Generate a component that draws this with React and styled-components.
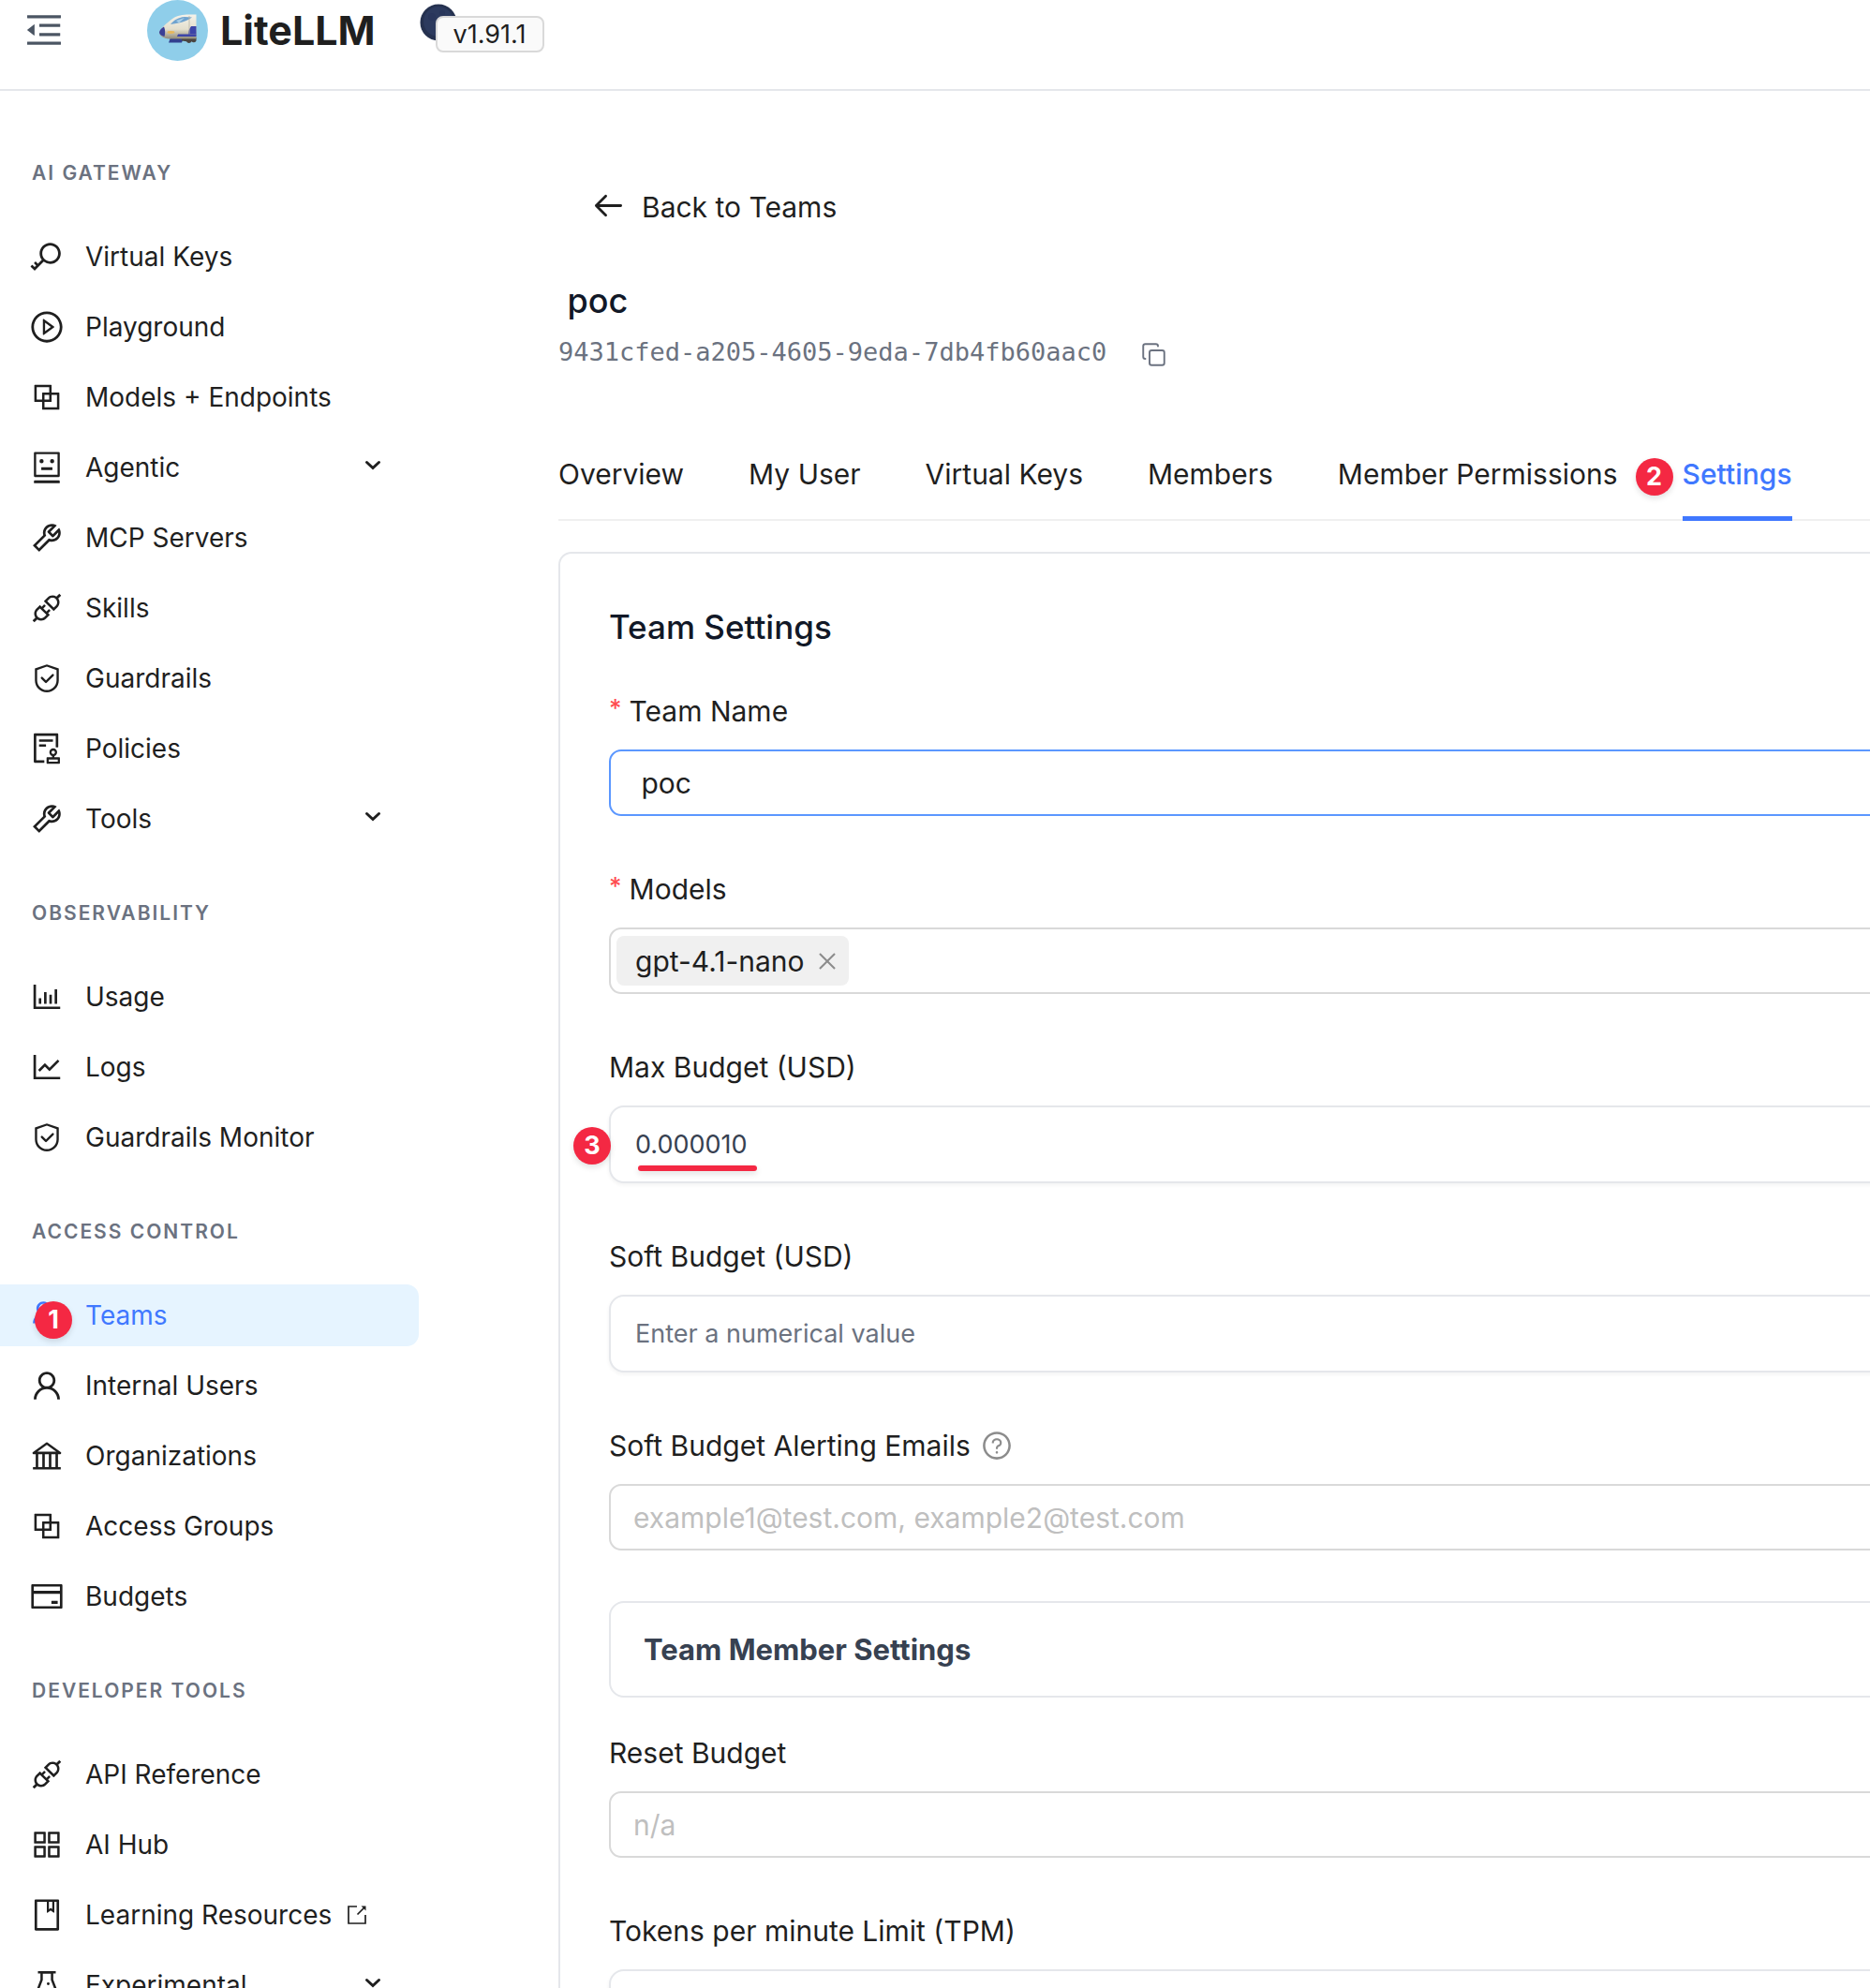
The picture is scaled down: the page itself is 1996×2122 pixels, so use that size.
import React, { useState } from "react";
import styled, { createGlobalStyle, css } from "styled-components";
import {
  AiOutlineApi,
  AiOutlineAppstore,
  AiOutlineAudit,
  AiOutlineBank,
  AiOutlineBarChart,
  AiOutlineBlock,
  AiOutlineBook,
  AiOutlineClose,
  AiOutlineCreditCard,
  AiOutlineExperiment,
  AiOutlineKey,
  AiOutlineLineChart,
  AiOutlineMenuFold,
  AiOutlinePlayCircle,
  AiOutlineQuestionCircle,
  AiOutlineRobot,
  AiOutlineSafety,
  AiOutlineTeam,
  AiOutlineTool,
  AiOutlineUser,
} from "react-icons/ai";

const sans = `Inter, "Liberation Sans", sans-serif`;

const GlobalStyle = createGlobalStyle`
  *, *::before, *::after { box-sizing: border-box; }
  body {
    margin: 0;
    background: #fff;
    color: #1f1f1f;
    font-family: ${sans};
    -webkit-font-smoothing: antialiased;
  }
  button, input, select { font: inherit; color: inherit; margin: 0; }
  h1, h2, p, ul { margin: 0; padding: 0; }
  ul { list-style: none; }
`;

const Shell = styled.div`
  display: flex;
  flex-direction: column;
  height: 100vh;
  overflow: hidden;
`;

/* ---------- top bar ---------- */

const TopBar = styled.header`
  display: flex;
  align-items: center;
  flex: none;
  padding: 0 24px 31px;
  border-bottom: 2px solid #e5e7eb;
`;

const plainButton = css`
  border: 0;
  padding: 0;
  background: none;
  cursor: pointer;
`;

const CollapseButton = styled.button`
  ${plainButton}
  display: flex;
  color: #4b5563;
`;

const Brand = styled.a`
  display: flex;
  align-items: center;
  gap: 13px;
  height: 64px;
  margin-left: 87px;
  color: #1f1f1f;
  font-size: 43px;
  font-weight: 700;
  text-decoration: none;
`;

const Version = styled.div`
  position: relative;
  margin-left: 64px;
`;

const Moon = styled.svg`
  position: absolute;
  left: -17px;
  top: -4px;
`;

const VersionTag = styled.a`
  position: relative;
  display: block;
  margin-top: 9px;
  padding: 0 17px;
  border: 2px solid #d9d9d9;
  border-radius: 8px;
  background: #fafafa;
  color: #1f1f1f;
  font-size: 27px;
  line-height: 35px;
  text-decoration: none;
`;

/* ---------- sidebar ---------- */

const Body = styled.div`
  display: flex;
  flex: 1;
  min-height: 0;
`;

const Sidebar = styled.nav`
  flex: none;
  width: 447px;
  overflow: hidden;
`;

const GroupTitle = styled.h2`
  padding: 54px 34px 43px;
  color: #6b7280;
  font-size: 21px;
  font-weight: 600;
  line-height: 27px;
  letter-spacing: 2px;
  text-transform: uppercase;
`;

const FirstTitle = styled(GroupTitle)`
  padding-top: 74px;
`;

const ItemList = styled.ul`
  display: flex;
  flex-direction: column;
  gap: 9px;
`;

const itemStyle = css`
  position: relative;
  display: flex;
  align-items: center;
  width: 100%;
  height: 66px;
  padding: 0 40px 0 31px;
  border: 0;
  border-radius: 0 13px 13px 0;
  background: ${(p) => (p.$active ? "#e6f4ff" : "none")};
  color: ${(p) => (p.$active ? "#4078ff" : "#1f1f1f")};
  font-size: 28px;
  text-align: left;
  text-decoration: none;
  white-space: nowrap;
  cursor: pointer;
`;

const ItemLink = styled.a`${itemStyle}`;
const ItemToggle = styled.button`${itemStyle}`;

const ItemIcon = styled.span`
  display: flex;
  flex: none;
  justify-content: center;
  width: 38px;
  margin-right: 22px;
`;

const ItemText = styled.span`
  flex: 1;
  display: flex;
  align-items: center;
  gap: 17px;
`;

const Marker = styled.span`
  position: absolute;
  left: ${(p) => p.$left}px;
  top: ${(p) => p.$top}px;
  width: 40px;
  height: 40px;
  border-radius: 50%;
  background: #f42843;
  box-shadow: 0 3px 6px rgba(0, 0, 0, 0.12);
  color: #fff;
  font-size: 27px;
  font-weight: 700;
  line-height: 40px;
  text-align: center;
`;

/* ---------- team page ---------- */

const Main = styled.main`
  flex: 1;
  min-width: 0;
  padding: 99px 0 0 149px;
  overflow: hidden;
`;

const BackButton = styled.button`
  ${plainButton}
  display: flex;
  align-items: center;
  gap: 18px;
  margin-left: 36px;
  font-size: 30px;
  line-height: 50px;

  svg { margin-bottom: 4px; }
`;

const TeamTitle = styled.h1`
  margin-top: 48px;
  color: #111827;
  font-size: 36px;
  font-weight: 500;
  line-height: 54px;
  white-space: pre;
`;

const IdRow = styled.div`
  display: flex;
  align-items: center;
  gap: 37px;
  height: 54px;
  color: #6b7280;
`;

const TeamId = styled.p`
  font-family: "DejaVu Sans Mono", monospace;
  font-size: 27px;
`;

const CopyButton = styled.button`
  ${plainButton}
  display: flex;
  padding-top: 6px;
`;

const TabBar = styled.div`
  display: flex;
  gap: 69px;
  margin-top: 56px;
  border-bottom: 2px solid #f0f0f0;
`;

const Tab = styled.button`
  ${plainButton}
  position: relative;
  height: 98px;
  margin-bottom: -2px;
  padding-top: 2px;
  border-bottom: 5px solid ${(p) => (p.$active ? "#4078ff" : "transparent")};
  color: ${(p) => (p.$active ? "#4078ff" : "#1f1f1f")};
  font-size: 30px;
  font-weight: ${(p) => (p.$active ? 500 : 400)};
  white-space: nowrap;
`;

const Card = styled.section`
  margin: 33px -80px 0 0;
  padding: 51px 52px;
  border: 2px solid #e5e7eb;
  border-radius: 14px;
`;

const CardTitle = styled.h2`
  margin-bottom: 39px;
  color: #111827;
  font-size: 35px;
  font-weight: 500;
  line-height: 54px;
`;

const Field = styled.div`
  position: relative;
  margin-bottom: 54px;
`;

const Label = styled.label`
  display: flex;
  align-items: center;
  gap: 8px;
  margin-bottom: 17px;
  font-size: 30px;
  line-height: 48px;
`;

const Required = styled.span`
  padding-bottom: 6px;
  color: #ff4d4f;
  font-size: 26px;
  font-weight: 500;
  line-height: 42px;
`;

const Help = styled.span`
  display: flex;
  padding-left: 3px;
  color: #8c8c8c;
`;

const outlined = css`
  display: block;
  width: 100%;
  height: 71px;
  border: 2px solid ${(p) => (p.$focused ? "#5b97ff" : "#d9d9d9")};
  border-radius: 13px;
  background: #fff;
  outline: none;
  font-size: 30px;
`;

const TextInput = styled.input`
  ${outlined}
  padding: 0 24px;
  &::placeholder { color: #bfbfbf; opacity: 1; }
`;

const Select = styled.select`
  ${outlined}
  padding: 0 24px;
  appearance: none;
  color: #bfbfbf;
`;

const TagBox = styled.div`
  ${outlined}
  display: flex;
  align-items: center;
  padding: 0 6px;
`;

const Tag = styled.span`
  display: flex;
  align-items: center;
  gap: 11px;
  height: 53px;
  padding: 0 10px 0 20px;
  border-radius: 8px;
  background: #f0f0f0;
`;

const RemoveTag = styled.button`
  ${plainButton}
  display: flex;
  color: #8c8c8c;
`;

const TagSearch = styled.input`
  flex: 1;
  min-width: 0;
  border: 0;
  background: none;
  outline: none;
`;

const NumberInput = styled.input`
  display: block;
  width: 100%;
  height: 83px;
  padding: 0 26px;
  border: 2px solid #e5e7eb;
  border-radius: 16px;
  background: #fff;
  box-shadow: 0 2px 4px rgba(0, 0, 0, 0.05);
  outline: none;
  color: #374151;
  font-size: 27px;
  &::placeholder { color: #6b7280; opacity: 1; }
`;

const Underline = styled.span`
  position: absolute;
  left: 31px;
  top: 129px;
  width: 127px;
  height: 6px;
  border-radius: 3px;
  background: #f42843;
  box-shadow: 0 3px 6px rgba(0, 0, 0, 0.12);
`;

const Accordion = styled.button`
  display: block;
  width: 100%;
  height: 103px;
  margin-bottom: 35px;
  padding: 0 35px;
  border: 2px solid #e5e7eb;
  border-radius: 16px;
  background: #fff;
  color: #374151;
  font-size: 31px;
  font-weight: 700;
  text-align: left;
`;

/* ---------- drawings ---------- */

const Logo = () => (
  <svg width="65" height="65" viewBox="0 0 65 65" aria-hidden="true">
    <defs>
      <linearGradient id="hull" x1="0" y1="0" x2="0" y2="1">
        <stop offset="0" stopColor="#f4f2ea" />
        <stop offset="0.6" stopColor="#e4dfcd" />
        <stop offset="1" stopColor="#8f8a78" />
      </linearGradient>
    </defs>
    <circle cx="32.5" cy="32.5" r="32.5" fill="#8fceea" />
    <path d="M25 40h14l-2 5.500H23z" fill="#33408f" />
    <path d="M37 40h15.500v3.500a3 3 0 0 1-5 .800 3 3 0 0 1-5.500 0L37 43.500z" fill="#4a4440" />
    <path d="M52.500 15.500v26H24C17 41 13 38 13 34.500 14 30 21 25 27 20c5-3.500 11-4.500 18-4.500z" fill="url(#hull)" />
    <path d="M13 34.500c0-2 2.500-4.500 5-6 1.500 3 1.500 7.500.5 10.500-3.500-1-5.500-2.500-5.500-4.500z" fill="#3a4096" />
    <path d="M25 26c3-4 8-7.500 15-8l8 .500c-4 3-10 6-23 7.500z" fill="#6fa3cf" />
    <path d="M31 22l9-3-6 5.500z" fill="#a9cfe8" />
    <path d="M47 28h5.500v8.500H44c0-3 1-6 3-8.500z" fill="#3d45a8" />
    <path d="M33 36.500h19.500v2.500H32z" fill="#3d45a8" />
    <path d="M45 17v19" stroke="#b9b4a4" strokeWidth="0.8" />
    <ellipse cx="25.500" cy="34.500" rx="4" ry="1.400" fill="#e6b85c" />
  </svg>
);

const ArrowLeft = () => (
  <svg width="35" height="35" viewBox="0 0 24 24" fill="none" stroke="currentColor" strokeWidth="1.9" strokeLinecap="round" strokeLinejoin="round" aria-hidden="true">
    <path d="M10 19l-7-7m0 0l7-7m-7 7h18" />
  </svg>
);

const Copy = () => (
  <svg width="27" height="27" viewBox="0 0 24 24" fill="none" stroke="currentColor" strokeWidth="1.7" strokeLinecap="round" strokeLinejoin="round" aria-hidden="true">
    <rect x="8" y="8" width="14" height="14" rx="2" />
    <path d="M4 16c-1.100 0-2-.900-2-2V4c0-1.100.900-2 2-2h10c1.100 0 2 .900 2 2" />
  </svg>
);

const ChevronIcon = styled.svg`
  margin-bottom: 4px;
`;

const Chevron = () => (
  <ChevronIcon width="18" height="12" viewBox="0 0 18 12" fill="none" stroke="currentColor" strokeWidth="3" strokeLinecap="round" aria-hidden="true">
    <path d="M2.500 2.500L9 8.500l6.500-6" />
  </ChevronIcon>
);

const External = () => (
  <svg width="20" height="20" viewBox="0 0 20 20" fill="none" stroke="currentColor" strokeWidth="1.7" aria-hidden="true">
    <path d="M10 1H1v18h18v-9" />
    <path d="M10.500 9.500L18 2" />
    <path d="M14.500 .500H19.500V5.500z" fill="currentColor" stroke="none" />
  </svg>
);

/* ---------- data ---------- */

const groups = [
  {
    title: "AI Gateway",
    items: [
      { label: "Virtual Keys", icon: AiOutlineKey },
      { label: "Playground", icon: AiOutlinePlayCircle },
      { label: "Models + Endpoints", icon: AiOutlineBlock },
      { label: "Agentic", icon: AiOutlineRobot, children: true },
      { label: "MCP Servers", icon: AiOutlineTool },
      { label: "Skills", icon: AiOutlineApi },
      { label: "Guardrails", icon: AiOutlineSafety, iconSize: 34 },
      { label: "Policies", icon: AiOutlineAudit },
      { label: "Tools", icon: AiOutlineTool, children: true },
    ],
  },
  {
    title: "Observability",
    items: [
      { label: "Usage", icon: AiOutlineBarChart },
      { label: "Logs", icon: AiOutlineLineChart },
      { label: "Guardrails Monitor", icon: AiOutlineSafety, iconSize: 34 },
    ],
  },
  {
    title: "Access Control",
    items: [
      { label: "Teams", icon: AiOutlineTeam, active: true, marker: "1" },
      { label: "Internal Users", icon: AiOutlineUser },
      { label: "Organizations", icon: AiOutlineBank },
      { label: "Access Groups", icon: AiOutlineBlock },
      { label: "Budgets", icon: AiOutlineCreditCard },
    ],
  },
  {
    title: "Developer Tools",
    items: [
      { label: "API Reference", icon: AiOutlineApi },
      { label: "AI Hub", icon: AiOutlineAppstore },
      { label: "Learning Resources", icon: AiOutlineBook, external: true },
      { label: "Experimental", icon: AiOutlineExperiment, children: true },
    ],
  },
];

const tabs = ["Overview", "My User", "Virtual Keys", "Members", "Member Permissions", "Settings"];

function NavItem({ item }) {
  const Icon = item.icon;
  const Wrapper = item.children ? ItemToggle : ItemLink;
  const props = item.children ? { type: "button" } : { href: "#" };
  return (
    <li>
      <Wrapper {...props} $active={item.active}>
        <ItemIcon>
          <Icon size={item.iconSize || 38} />
        </ItemIcon>
        <ItemText>
          {item.label}
          {item.external && <External />}
        </ItemText>
        {item.children && <Chevron />}
        {item.marker && <Marker $left={37} $top={18}>{item.marker}</Marker>}
      </Wrapper>
    </li>
  );
}

export default function App() {
  const [name, setName] = useState(" poc");
  const [maxBudget, setMaxBudget] = useState("0.000010");

  return (
    <Shell>
      <GlobalStyle />
      <TopBar>
        <CollapseButton type="button" aria-label="Collapse sidebar">
          <AiOutlineMenuFold size={46} />
        </CollapseButton>
        <Brand href="#">
          <Logo />
          LiteLLM
        </Brand>
        <Version>
          <Moon width="40" height="40" viewBox="0 0 40 40" aria-hidden="true">
            <circle cx="20" cy="20" r="19.500" fill="#25314f" />
            <circle cx="20" cy="19" r="16" fill="#2c3a5e" />
            <circle cx="13" cy="14" r="4" fill="#29365b" />
            <circle cx="24" cy="10" r="3" fill="#29365b" />
          </Moon>
          <VersionTag href="#">v1.91.1</VersionTag>
        </Version>
      </TopBar>

      <Body>
        <Sidebar aria-label="Main">
          {groups.map((group, i) => {
            const Title = i === 0 ? FirstTitle : GroupTitle;
            return (
              <React.Fragment key={group.title}>
                <Title>{group.title}</Title>
                <ItemList>
                  {group.items.map((item) => (
                    <NavItem key={item.label} item={item} />
                  ))}
                </ItemList>
              </React.Fragment>
            );
          })}
        </Sidebar>

        <Main>
          <BackButton type="button">
            <ArrowLeft />
            Back to Teams
          </BackButton>
          <TeamTitle>{" poc"}</TeamTitle>
          <IdRow>
            <TeamId>9431cfed-a205-4605-9eda-7db4fb60aac0</TeamId>
            <CopyButton type="button" aria-label="Copy team ID">
              <Copy />
            </CopyButton>
          </IdRow>

          <TabBar role="tablist">
            {tabs.map((tab) => {
              const active = tab === "Settings";
              return (
                <Tab key={tab} type="button" role="tab" aria-selected={active} $active={active}>
                  {tab}
                  {active && <Marker $left={-50} $top={31}>2</Marker>}
                </Tab>
              );
            })}
          </TabBar>

          <Card>
            <CardTitle>Team Settings</CardTitle>

            <Field>
              <Label htmlFor="team-name">
                <Required>*</Required>
                Team Name
              </Label>
              <TextInput id="team-name" $focused value={name} onChange={(e) => setName(e.target.value)} />
            </Field>

            <Field>
              <Label htmlFor="models">
                <Required>*</Required>
                Models
              </Label>
              <TagBox>
                <Tag>
                  gpt-4.1-nano
                  <RemoveTag type="button" aria-label="Remove gpt-4.1-nano">
                    <AiOutlineClose size={26} />
                  </RemoveTag>
                </Tag>
                <TagSearch id="models" />
              </TagBox>
            </Field>

            <Field>
              <Label htmlFor="max-budget">Max Budget (USD)</Label>
              <NumberInput
                id="max-budget"
                inputMode="decimal"
                value={maxBudget}
                onChange={(e) => setMaxBudget(e.target.value)}
              />
              <Marker $left={-38} $top={88}>3</Marker>
              <Underline />
            </Field>

            <Field>
              <Label htmlFor="soft-budget">Soft Budget (USD)</Label>
              <NumberInput id="soft-budget" inputMode="decimal" placeholder="Enter a numerical value" />
            </Field>

            <Field>
              <Label htmlFor="emails">
                Soft Budget Alerting Emails
                <Help>
                  <AiOutlineQuestionCircle size={34} />
                </Help>
              </Label>
              <TextInput id="emails" placeholder="example1@test.com, example2@test.com" />
            </Field>

            <Accordion type="button" aria-expanded="false">
              Team Member Settings
            </Accordion>

            <Field>
              <Label htmlFor="reset-budget">Reset Budget</Label>
              <Select id="reset-budget" defaultValue="">
                <option value="">n/a</option>
              </Select>
            </Field>

            <Field>
              <Label htmlFor="tpm">Tokens per minute Limit (TPM)</Label>
              <NumberInput id="tpm" inputMode="numeric" />
            </Field>
          </Card>
        </Main>
      </Body>
    </Shell>
  );
}
